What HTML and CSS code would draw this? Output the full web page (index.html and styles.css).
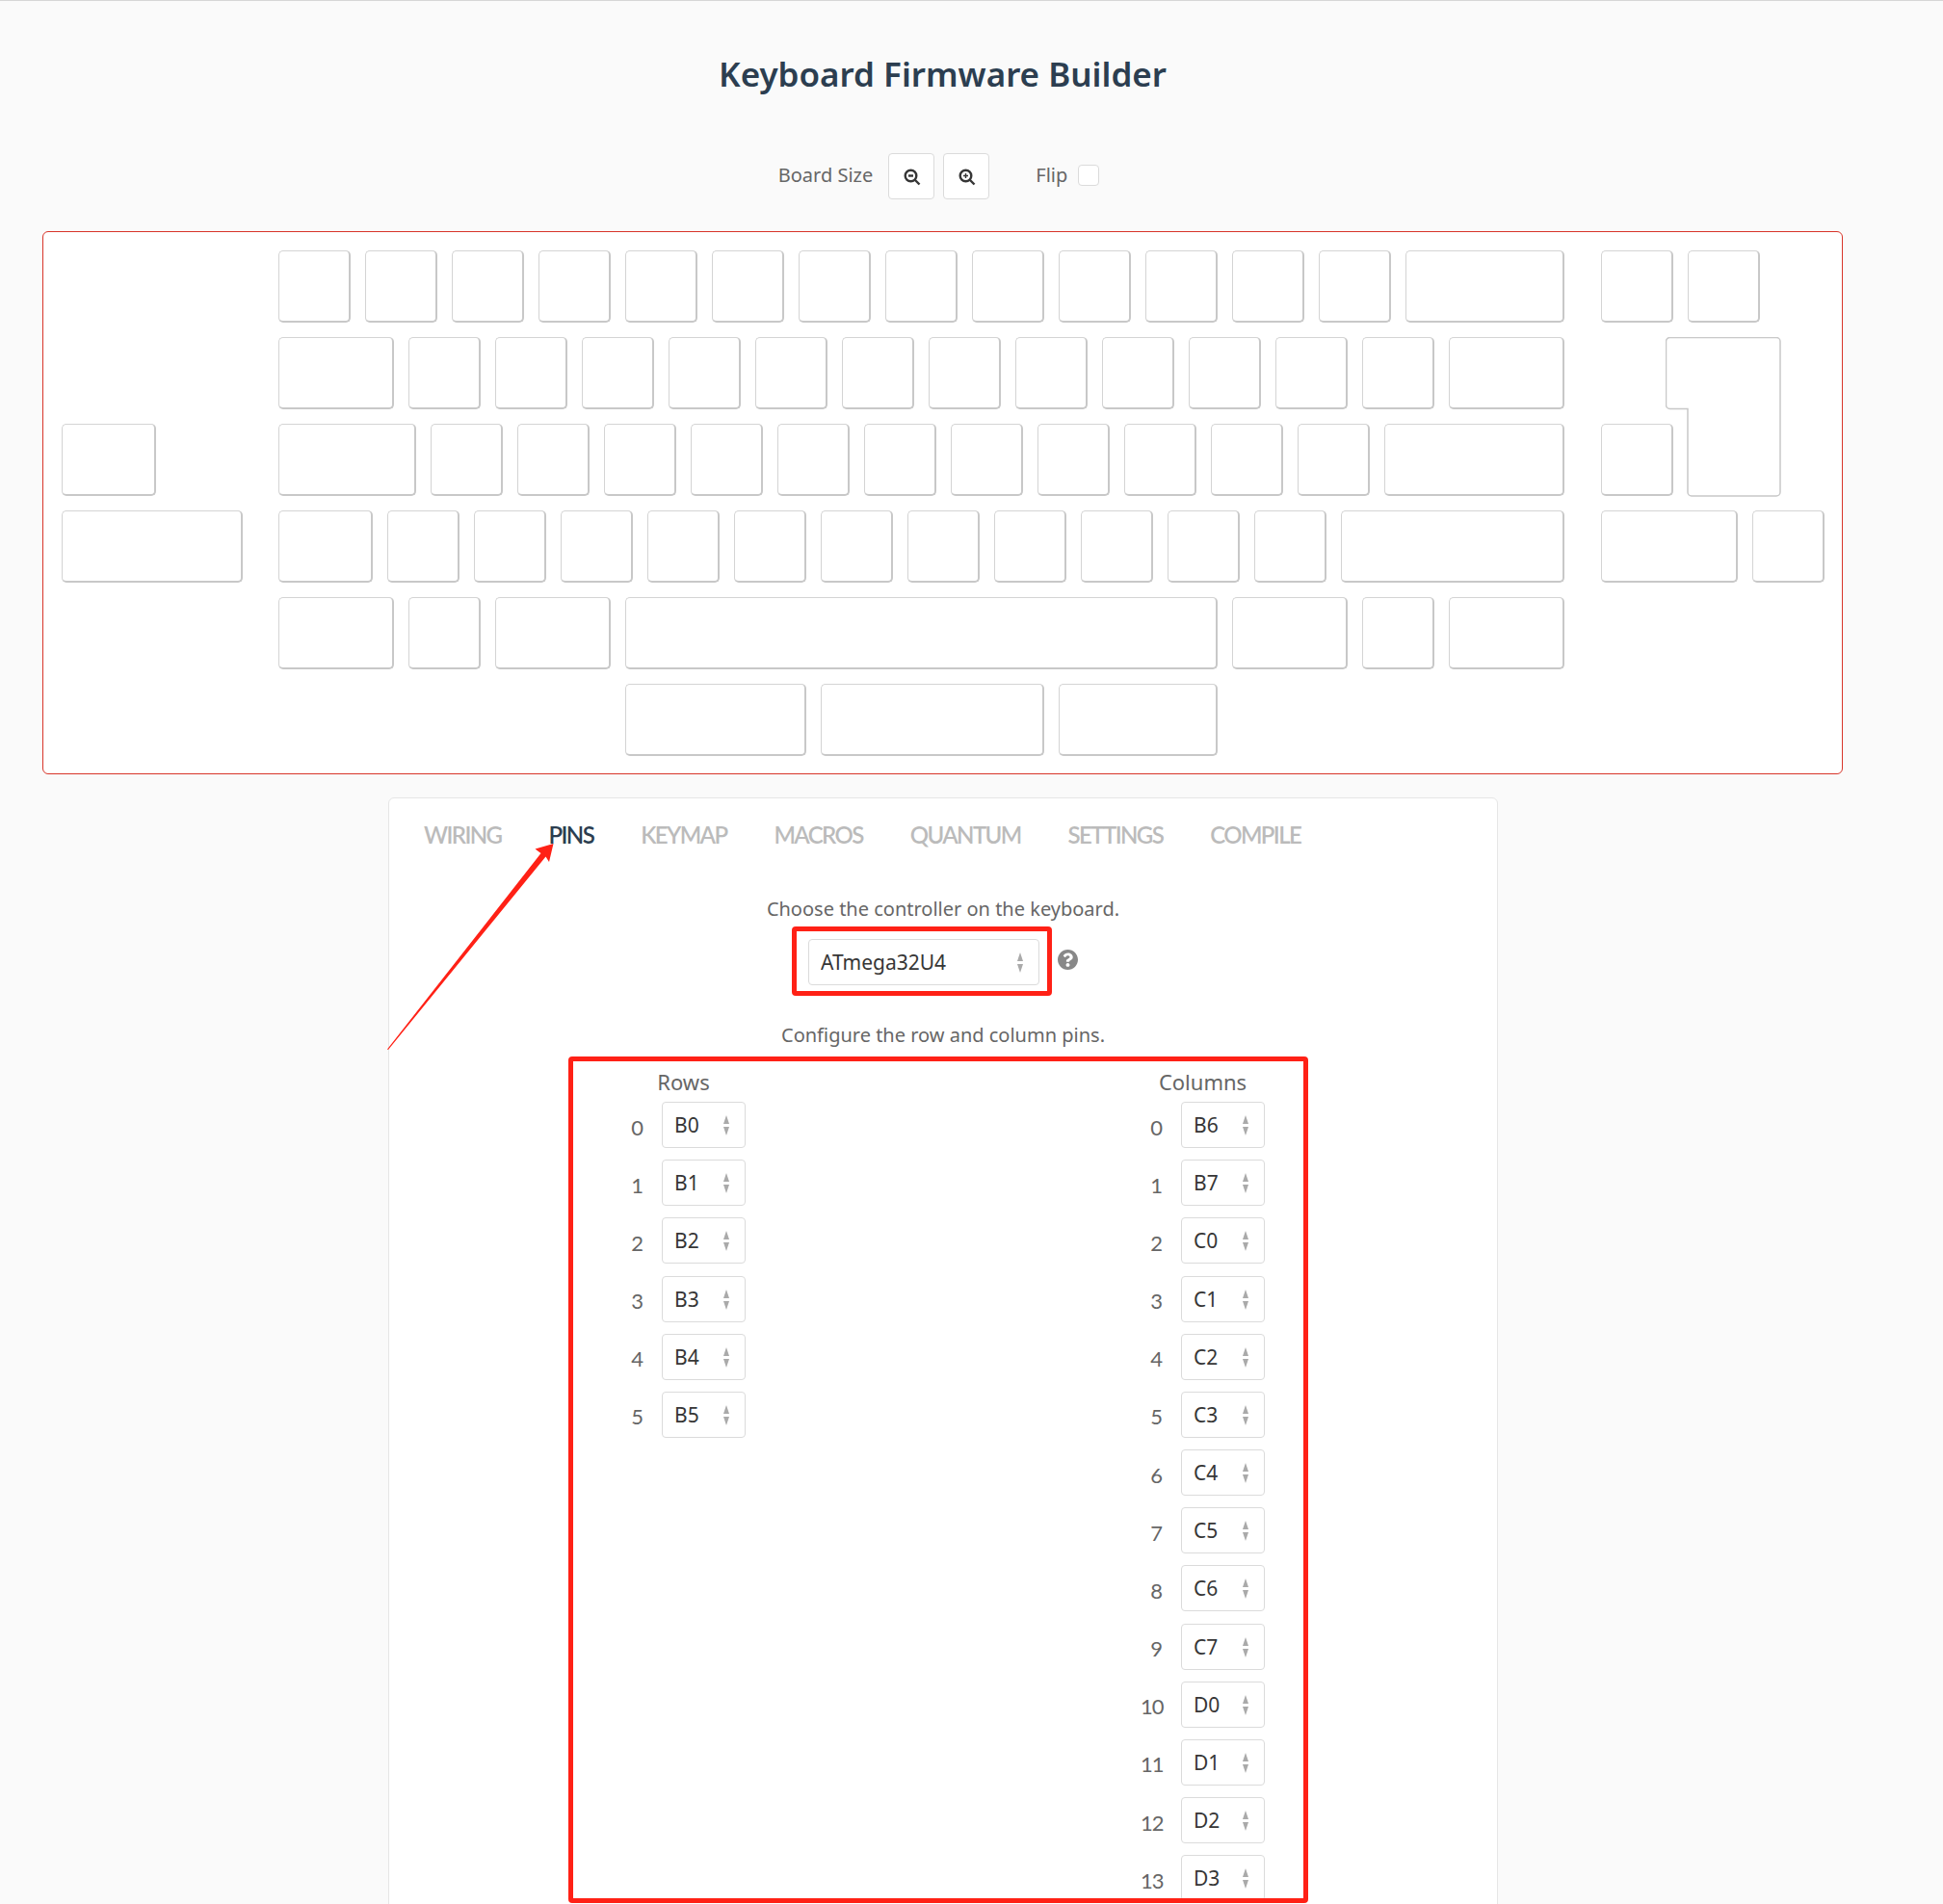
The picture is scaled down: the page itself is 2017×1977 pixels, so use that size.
FILE: index.html
```html
<!DOCTYPE html>
<html lang="en">
<head>
  <meta charset="UTF-8">
  <title>Keyboard Firmware Builder</title>
  <link rel="stylesheet" href="styles.css">
</head>
<body>
<div class="page">
  <h1 class="title">Keyboard Firmware Builder</h1>

  <div class="controls">
    <span class="controls-label">Board Size</span>
    <button class="zoom-btn" type="button">
      <svg viewBox="0 0 18 18" width="18" height="18"><circle cx="7.500" cy="7.500" r="5.800"/><path d="M11.500 11.500 16.500 16.500"/><path d="M5 7.500h5"/></svg>
    </button>
    <button class="zoom-btn" type="button">
      <svg viewBox="0 0 18 18" width="18" height="18"><circle cx="7.500" cy="7.500" r="5.800"/><path d="M11.500 11.500 16.500 16.500"/><path class="thin" d="M5 7.500h5M7.500 5v5"/></svg>
    </button>
    <span class="controls-label flip">Flip</span>
    <span class="checkbox"></span>
  </div>

  <div class="board">
    <div class="row">
      <i class="s250"></i>
      <b class="key k100"></b><b class="key k100"></b><b class="key k100"></b><b class="key k100"></b><b class="key k100"></b><b class="key k100"></b><b class="key k100"></b><b class="key k100"></b><b class="key k100"></b><b class="key k100"></b><b class="key k100"></b><b class="key k100"></b><b class="key k100"></b>
      <b class="key k200"></b>
      <i class="s025"></i>
      <b class="key k100"></b><b class="key k100"></b>
    </div>
    <div class="row">
      <i class="s250"></i>
      <b class="key k150"></b>
      <b class="key k100"></b><b class="key k100"></b><b class="key k100"></b><b class="key k100"></b><b class="key k100"></b><b class="key k100"></b><b class="key k100"></b><b class="key k100"></b><b class="key k100"></b><b class="key k100"></b><b class="key k100"></b><b class="key k100"></b>
      <b class="key k150"></b>
      <i class="s100"></i>
      <div class="iso-enter">
        <svg width="120" height="167" viewBox="0 0 120 167"><path d="M4.500 .5H115a4 4 0 0 1 4 4V161a4 4 0 0 1-4 4H27a4 4 0 0 1-4-4V74.500H4.500a4 4 0 0 1-4-4V4.500a4 4 0 0 1 4-4z"/></svg>
      </div>
    </div>
    <div class="row">
      <b class="key k125"></b>
      <i class="s125"></i>
      <b class="key k175"></b>
      <b class="key k100"></b><b class="key k100"></b><b class="key k100"></b><b class="key k100"></b><b class="key k100"></b><b class="key k100"></b><b class="key k100"></b><b class="key k100"></b><b class="key k100"></b><b class="key k100"></b><b class="key k100"></b>
      <b class="key k225"></b>
      <i class="s025"></i>
      <b class="key k100"></b>
    </div>
    <div class="row">
      <b class="key k225"></b>
      <i class="s025"></i>
      <b class="key k125"></b>
      <b class="key k100"></b><b class="key k100"></b><b class="key k100"></b><b class="key k100"></b><b class="key k100"></b><b class="key k100"></b><b class="key k100"></b><b class="key k100"></b><b class="key k100"></b><b class="key k100"></b><b class="key k100"></b>
      <b class="key k275"></b>
      <i class="s025"></i>
      <b class="key k175"></b>
      <b class="key k100"></b>
    </div>
    <div class="row">
      <i class="s250"></i>
      <b class="key k150"></b>
      <b class="key k100"></b>
      <b class="key k150"></b>
      <b class="key k700"></b>
      <b class="key k150"></b>
      <b class="key k100"></b>
      <b class="key k150"></b>
    </div>
    <div class="row">
      <i class="s650"></i>
      <b class="key k225"></b>
      <b class="key k275"></b>
      <b class="key k200"></b>
    </div>
  </div>

  <div class="panel">
    <ul class="tabs">
      <li>WIRING</li>
      <li class="active">PINS</li>
      <li>KEYMAP</li>
      <li>MACROS</li>
      <li>QUANTUM</li>
      <li>SETTINGS</li>
      <li>COMPILE</li>
    </ul>

    <p class="hint">Choose the controller on the keyboard.</p>
    <div class="controller">
      <div class="select select-wide"><select><option>ATmega32U4</option></select></div>
      <svg class="help" viewBox="8 8 496 496" width="21" height="21"><path d="M504 256c0 136.997-111.043 248-248 248S8 392.997 8 256C8 119.083 119.043 8 256 8s248 111.083 248 248zM262.655 90c-54.497 0-89.255 22.957-116.549 63.758-3.536 5.286-2.353 12.415 2.715 16.258l34.699 26.31c5.205 3.947 12.621 3.008 16.665-2.122 17.864-22.658 30.113-35.797 57.303-35.797 20.429 0 45.698 13.148 45.698 32.958 0 14.976-12.363 22.667-32.534 33.976C247.128 238.528 216 254.941 216 296v4c0 6.627 5.373 12 12 12h56c6.627 0 12-5.373 12-12v-1.333c0-28.462 83.186-29.647 83.186-106.667 0-58.002-60.165-102-116.531-102zM256 338c-25.365 0-46 20.635-46 46 0 25.364 20.635 46 46 46s46-20.636 46-46c0-25.365-20.635-46-46-46z"/></svg>
    </div>

    <p class="hint hint-pins">Configure the row and column pins.</p>
    <div class="pins">
      <div class="pin-col">
        <div class="pin-head">Rows</div>
        <div class="pin"><span class="pin-num">0</span><div class="select"><select><option>B0</option></select></div></div>
        <div class="pin"><span class="pin-num">1</span><div class="select"><select><option>B1</option></select></div></div>
        <div class="pin"><span class="pin-num">2</span><div class="select"><select><option>B2</option></select></div></div>
        <div class="pin"><span class="pin-num">3</span><div class="select"><select><option>B3</option></select></div></div>
        <div class="pin"><span class="pin-num">4</span><div class="select"><select><option>B4</option></select></div></div>
        <div class="pin"><span class="pin-num">5</span><div class="select"><select><option>B5</option></select></div></div>
      </div>
      <div class="pin-col">
        <div class="pin-head">Columns</div>
        <div class="pin"><span class="pin-num">0</span><div class="select"><select><option>B6</option></select></div></div>
        <div class="pin"><span class="pin-num">1</span><div class="select"><select><option>B7</option></select></div></div>
        <div class="pin"><span class="pin-num">2</span><div class="select"><select><option>C0</option></select></div></div>
        <div class="pin"><span class="pin-num">3</span><div class="select"><select><option>C1</option></select></div></div>
        <div class="pin"><span class="pin-num">4</span><div class="select"><select><option>C2</option></select></div></div>
        <div class="pin"><span class="pin-num">5</span><div class="select"><select><option>C3</option></select></div></div>
        <div class="pin"><span class="pin-num">6</span><div class="select"><select><option>C4</option></select></div></div>
        <div class="pin"><span class="pin-num">7</span><div class="select"><select><option>C5</option></select></div></div>
        <div class="pin"><span class="pin-num">8</span><div class="select"><select><option>C6</option></select></div></div>
        <div class="pin"><span class="pin-num">9</span><div class="select"><select><option>C7</option></select></div></div>
        <div class="pin"><span class="pin-num">10</span><div class="select"><select><option>D0</option></select></div></div>
        <div class="pin"><span class="pin-num">11</span><div class="select"><select><option>D1</option></select></div></div>
        <div class="pin"><span class="pin-num">12</span><div class="select"><select><option>D2</option></select></div></div>
        <div class="pin"><span class="pin-num">13</span><div class="select"><select><option>D3</option></select></div></div>
      </div>
    </div>
  </div>

  <!-- red markup drawn on top of the screenshot -->
  <div class="mark mark-controller"></div>
  <div class="mark mark-pins"></div>
  <svg class="mark-arrow" width="180" height="220" viewBox="400 874 180 220">
    <path d="M402 1089.500 561.500 886 555.500 881.500 574.500 876 570 895 566.500 889.500 403 1090z"/>
  </svg>
</div>
</body>
</html>
```

FILE: styles.css
```css
* {
  box-sizing: border-box;
}

html, body {
  height: 1977px;
  overflow: hidden;
}

body {
  margin: 0;
  background: #fafafa;
  border-top: 1px solid #d6d6d6;
  color: #666;
  font-family: "Noto Sans", "Open Sans", sans-serif;
  font-size: 20px;
}

.page {
  position: relative;
  width: 1957px;
  height: 1976px;
  overflow: hidden;
}

.title {
  margin: 0;
  height: 158px;
  padding-top: 50px;
  color: #2c3e50;
  font-size: 35px;
  font-weight: 600;
  line-height: 52px;
  text-align: center;
}

.controls {
  display: flex;
  align-items: center;
  justify-content: center;
  height: 48px;
  padding-right: 8px;
}

.controls-label {
  margin-right: 16px;
  margin-bottom: 3px;
}

.flip {
  margin-left: 39px;
  margin-right: 11px;
}

.zoom-btn {
  display: flex;
  align-items: center;
  justify-content: center;
  width: 48px;
  height: 48px;
  margin: 0 9px 0 0;
  padding: 2px 0 0 1px;
  background: #fff;
  border: 1px solid #dbdbdb;
  border-radius: 4px;
}

.zoom-btn svg {
  fill: none;
  stroke: #363636;
  stroke-width: 2.4;
}

.zoom-btn .thin {
  stroke-width: 1.4;
}

.checkbox {
  width: 22px;
  height: 22px;
  margin-bottom: 3px;
  background: #fff;
  border: 1px solid #dbdbdb;
  border-radius: 4px;
}

/* keyboard: 1u = 90px, a key sits in its slot less a 15px gap */
.board {
  width: 1869px;
  height: 564px;
  margin: 33px 0 0 44px;
  padding: 19px 0 0 19px;
  background: #fff;
  border: 1px solid #d8352a;
  border-radius: 6px;
}

.row {
  display: flex;
  height: 90px;
}

.row i {
  flex: none;
}

.s025 { width: 22.5px; }
.s100 { width: 90px; }
.s125 { width: 112.5px; }
.s250 { width: 225px; }
.s650 { width: 585px; }

.key {
  flex: none;
  height: 75px;
  margin-right: 15px;
  background: #fff;
  border: 1px solid #d4d4d4;
  border-right: 2px solid #c8c8c8;
  border-bottom: 2px solid #c8c8c8;
  border-radius: 5px;
}

.k100 { width: 75px; }
.k125 { width: 97.5px; }
.k150 { width: 120px; }
.k175 { width: 142.5px; }
.k200 { width: 165px; }
.k225 { width: 187.5px; }
.k275 { width: 232.5px; }
.k700 { width: 615px; }

.iso-enter {
  position: relative;
  flex: none;
  width: 119px;
  height: 74px;
}

.iso-enter svg {
  position: absolute;
  top: 0;
  left: 0;
  fill: #fff;
  stroke: #c8c8c8;
  stroke-width: 1.5;
}

/* panel below the keyboard, runs off the bottom of the window */
.panel {
  width: 1152px;
  height: 1200px;
  margin: 24px 0 0 403px;
  background: #fff;
  border: 1px solid #e6e6e6;
  border-radius: 6px;
}

.tabs {
  display: flex;
  gap: 49px;
  height: 76px;
  margin: 0;
  padding: 0 0 0 36px;
  list-style: none;
  color: #bbb;
  font-family: Lato, sans-serif;
  font-size: 24px;
  font-weight: 600;
  letter-spacing: -1.6px;
  line-height: 76px;
}

.tabs .active {
  color: #2c3e50;
}

.hint {
  margin: 25px 0 0;
  line-height: 28px;
  text-align: center;
}

.hint-pins {
  margin-top: 38px;
}

.controller {
  display: flex;
  justify-content: center;
  align-items: center;
  gap: 19px;
  margin-top: 17px;
}

.help {
  margin-bottom: 5px;
  fill: #888;
}

.select {
  position: relative;
  width: 87px;
  height: 48px;
}

.select-wide {
  width: 240px;
}

.select select {
  display: block;
  width: 100%;
  height: 100%;
  padding: 0 0 0 12px;
  appearance: none;
  background: #fff;
  border: 1px solid #dbdbdb;
  border-radius: 4px;
  color: #363636;
  font-family: inherit;
  font-size: 21px;
}

/* the up and down arrows */
.select::before,
.select::after {
  content: "";
  position: absolute;
  right: 17px;
  border-left: 3.5px solid transparent;
  border-right: 3.5px solid transparent;
}

.select::before {
  top: 14px;
  border-bottom: 9px solid #aaa;
}

.select::after {
  top: 26px;
  border-top: 9px solid #aaa;
}

.pins {
  display: flex;
  justify-content: center;
  gap: 410px;
  margin-top: 20px;
}

.pin-col {
  width: 129px;
}

.pin-head {
  height: 29px;
  font-size: 22px;
  line-height: 28px;
  text-align: center;
}

.pin {
  display: flex;
  align-items: center;
  gap: 20px;
  height: 60.18px;
}

.pin-num {
  width: 22px;
  padding-top: 4px;
  font-family: Lato, sans-serif;
  font-size: 22px;
  letter-spacing: -1px;
  text-align: right;
}

.mark {
  position: absolute;
  border: 5px solid #ff2116;
  border-radius: 4px;
}

.mark-controller {
  left: 822px;
  top: 961px;
  width: 270px;
  height: 72px;
}

.mark-pins {
  left: 590px;
  top: 1096px;
  width: 768px;
  height: 879px;
}

.mark-arrow {
  position: absolute;
  left: 400px;
  top: 873px;
  fill: #ff2116;
}
```
